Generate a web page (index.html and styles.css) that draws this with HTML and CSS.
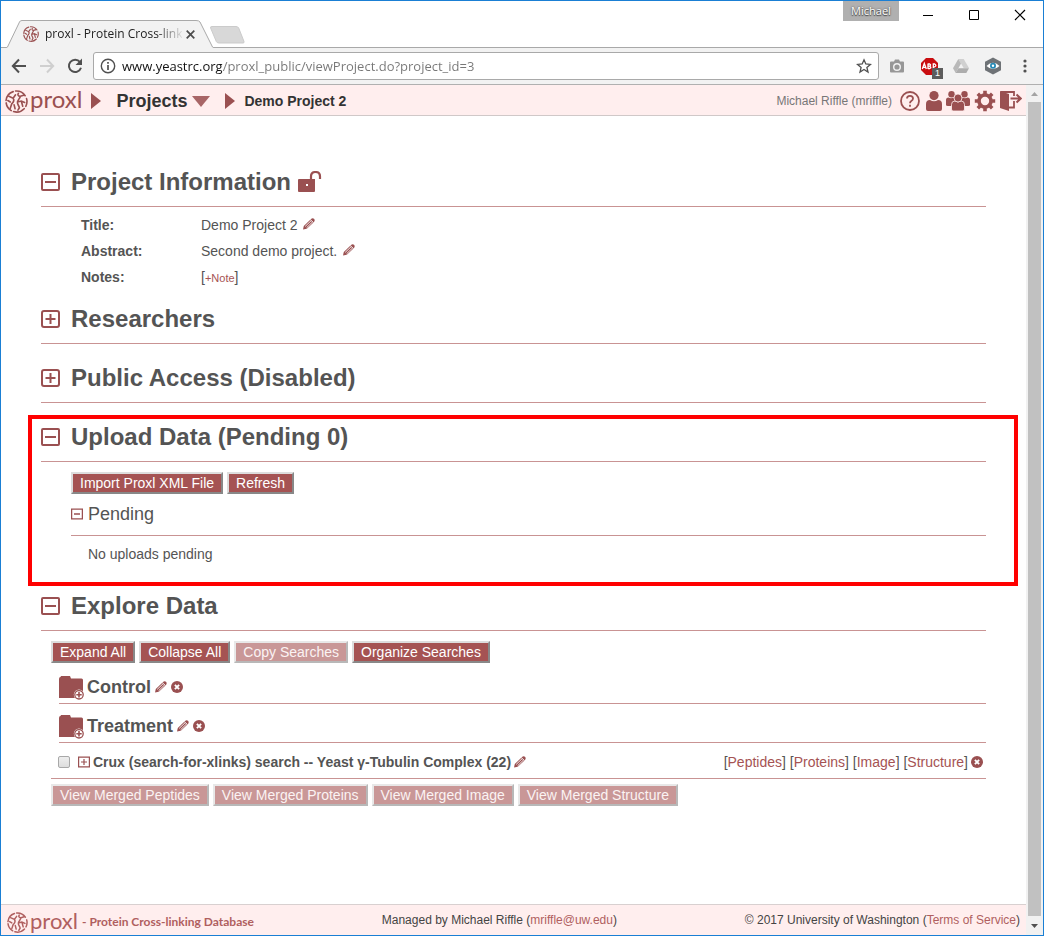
FILE: index.html
```html
<!DOCTYPE html>
<html lang="en">
<head>
<meta charset="utf-8">
<title>proxl - Protein Cross-linking Database</title>
<link rel="stylesheet" href="styles.css">
</head>
<body>
<svg class="defs" aria-hidden="true">
  <symbol id="logo" viewBox="0 0 24 24">
    <g fill="none" stroke="currentColor" stroke-width="1.7" stroke-linecap="round">
      <path d="M8.500 1.700A10.900 10.900 0 0 0 1.100 11M1.200 13.500A10.900 10.900 0 0 0 6.500 21.500M9 22.500A10.900 10.900 0 0 0 20 19.500M21.700 17A10.900 10.900 0 0 0 22.500 9M21 6A10.900 10.900 0 0 0 11 1.100"/>
      <path d="M4 6.500L8.500 8.500L11 5M8.500 8.500C10 10.500 9 12.500 7 14.500L5.500 19M3 11L5.500 12.500M14 3.500C12.800 5 13.800 6.800 16 6.500L19.500 5.500M16 6.500C15.500 9 13.500 10 13 12.500C12.600 15 14.500 16 15 18.500L13.500 21M9.500 15.500L10.500 19.500M13 12.500L17 11.500L20.500 13M17 11.500L18.500 17"/>
    </g>
  </symbol>
  <symbol id="minus" viewBox="0 0 19 20">
    <rect x="1" y="2" width="17" height="16" rx="1" fill="none" stroke="currentColor" stroke-width="2"/>
    <path d="M4 10H15" stroke="currentColor" stroke-width="2"/>
  </symbol>
  <symbol id="plus" viewBox="0 0 19 20">
    <rect x="1" y="2" width="17" height="16" rx="2" fill="none" stroke="currentColor" stroke-width="2"/>
    <path d="M4.500 10H14.500M9.500 5V15" stroke="currentColor" stroke-width="2"/>
  </symbol>
  <symbol id="minus-small" viewBox="0 0 12 12">
    <path d="M.6 1.100H11.400V10.900H.6ZM3 6H9" fill="none" stroke="currentColor" stroke-width="1.300"/>
  </symbol>
  <symbol id="plus-small" viewBox="0 0 12 12">
    <path d="M.6 1.100H11.400V10.900H.6ZM3 6H9M6 3V9" fill="none" stroke="currentColor" stroke-width="1.200"/>
  </symbol>
  <symbol id="pencil" viewBox="0 0 12 12">
    <path d="M0 11.500L.8 8L7.800 1.200Q9.500 -.4 11 .8Q12.400 2.200 11 3.900L3.800 10.800Z" fill="currentColor"/>
    <path d="M2.200 8.400L8.200 2.600M3.600 9.800L9.600 3.900M7.400 1.700L10.500 4.700" fill="none" stroke="#fff" stroke-width=".9"/>
  </symbol>
  <symbol id="remove" viewBox="0 0 12 12">
    <circle cx="6" cy="6" r="6" fill="currentColor"/>
    <path d="M3.900 3.900L8.100 8.100M8.100 3.900L3.900 8.100" stroke="#fff" stroke-width="1.900"/>
  </symbol>
  <symbol id="folder" viewBox="0 0 26 24">
    <path d="M0 22V3Q0 1 1.500 1L2 0H11L12 2.500H22.500Q24 2.500 24 4V22Z" fill="currentColor"/>
    <circle cx="20" cy="18.800" r="5.200" fill="#fff"/>
    <circle cx="20" cy="18.800" r="4.200" fill="none" stroke="currentColor" stroke-width="1.300"/>
    <path d="M17.300 18.800H22.700M20 16.100V21.500" stroke="currentColor" stroke-width="1.600"/>
  </symbol>
  <symbol id="tri-right" viewBox="0 0 10 16">
    <path d="M0 0L10 8L0 16Z" fill="currentColor"/>
  </symbol>
</svg>

<div class="window">
  <div class="titlebar">
    <div class="tab">
      <svg class="tab-shape" viewBox="0 0 208 28" preserveAspectRatio="none" aria-hidden="true"><path d="M0 28L1.500 27L13.500 2Q14 .5 16 .5H190Q193 .5 194 2L206.500 27L208 28" fill="#f2f2f2" stroke="#a9a9a9"/></svg>
      <svg class="tab-logo" aria-hidden="true"><use href="#logo"/></svg>
      <span class="tab-title">proxl - Protein Cross-link</span>
      <button class="plain tab-close" aria-label="Close tab"><svg width="9" height="9" viewBox="0 0 9 9"><path d="M.7 .7L8.300 8.300M8.300 .7L.7 8.300" stroke="#4c4c4c" stroke-width="1.700"/></svg></button>
    </div>
    <button class="plain new-tab" aria-label="New tab"><svg width="35" height="18" viewBox="0 0 35 18"><path d="M2 .5H26Q28 .5 28.700 2L34 15.500Q34.500 17 33 17H9Q7 17 6.300 15.500L.6 2Q0 .5 2 .5Z" fill="#d8d8d8" stroke="#cbcbcb"/></svg></button>
    <div class="window-controls">
      <span class="profile">Michael</span>
      <button class="plain" aria-label="Minimize"><svg width="12" height="12" viewBox="0 0 12 12"><path d="M1 6.500H11" stroke="#000"/></svg></button>
      <button class="plain" aria-label="Maximize"><svg width="12" height="12" viewBox="0 0 12 12"><path d="M1.500 1.500H10.500V10.500H1.500Z" fill="none" stroke="#000"/></svg></button>
      <button class="plain" aria-label="Close"><svg width="12" height="12" viewBox="0 0 12 12"><path d="M1 1L11 11M11 1L1 11" stroke="#000" stroke-width="1.200"/></svg></button>
    </div>
  </div>

  <div class="toolbar">
    <button class="plain nav" aria-label="Back"><svg width="16" height="16" viewBox="0 0 16 16"><path d="M15 8H2M8 1.500L1.800 8L8 14.500" fill="none" stroke="#505050" stroke-width="2"/></svg></button>
    <button class="plain nav" aria-label="Forward"><svg width="16" height="16" viewBox="0 0 16 16"><path d="M1 8H14M8 1.500L14.200 8L8 14.500" fill="none" stroke="#cfcfcf" stroke-width="2"/></svg></button>
    <button class="plain nav" aria-label="Reload"><svg width="16" height="16" viewBox="0 0 16 16"><path d="M13 4A6.200 6.200 0 1 0 14 9.800" fill="none" stroke="#505050" stroke-width="2"/><path d="M15 .5V7H8.500Z" fill="#505050"/></svg></button>
    <div class="omnibox">
      <svg width="16" height="16" viewBox="0 0 16 16" aria-hidden="true"><circle cx="8" cy="8" r="6.700" fill="none" stroke="#505050" stroke-width="1.400"/><path d="M8 7V12M8 4V5.700" stroke="#505050" stroke-width="1.700"/></svg>
      <input class="url" type="text" aria-label="Address" value="www.yeastrc.org/proxl_public/viewProject.do?project_id=3">
      <button class="plain" aria-label="Bookmark this page"><svg width="16" height="16" viewBox="0 0 16 16"><path d="M8 1.800L9.800 6L14.400 6.400L10.900 9.400L12 14L8 11.500L4 14L5.100 9.400L1.600 6.400L6.200 6Z" fill="none" stroke="#505050" stroke-width="1.300"/></svg></button>
    </div>
    <button class="plain ext" aria-label="Screenshot"><svg width="16" height="14" viewBox="0 0 16 14"><path d="M2 2.500H5L6 .5H10L11 2.500H14Q15 2.500 15 3.500V12.500Q15 13.500 14 13.500H2Q1 13.500 1 12.500V3.500Q1 2.500 2 2.500Z" fill="#979797"/><circle cx="8" cy="8" r="3.300" fill="none" stroke="#f2f2f2" stroke-width="1.400"/></svg></button>
    <button class="plain ext" aria-label="Adblock Plus">
      <svg width="17" height="17" viewBox="0 0 17 17"><path d="M5 0H12L17 5V12L12 17H5L0 12V5Z" fill="#c90d10"/><path d="M1.300 11L3.300 5.500L5.300 11M2 9.300H4.700M7 5.500V11M7 6H8.700Q10.500 7.100 8.700 8.200H7M8.700 8.200Q11 9.500 8.700 10.500H7M12.300 11.200V6H13.700Q16 7.400 13.700 8.800H12.300" fill="none" stroke="#fff" stroke-width="1.300"/></svg>
      <span class="badge">1</span>
    </button>
    <button class="plain ext" aria-label="Drive"><svg width="16" height="14" viewBox="0 0 16 14"><path d="M5.300 0H10.700L16 9H10.700Z" fill="#d0d0d0"/><path d="M5.300 0L8 4.600L2.700 14L0 9.300Z" fill="#b9b9b9"/><path d="M5.400 9.300H16L13.300 14H2.700Z" fill="#adadad"/></svg></button>
    <button class="plain ext" aria-label="Privacy"><svg width="18" height="18" viewBox="0 0 18 18"><path d="M9 .5L17 4.800V13.200L9 17.500L1 13.200V4.800Z" fill="#6e7276"/><path d="M2.500 9Q9 2.500 15.500 9Q9 15 2.500 9Z" fill="#fff"/><circle cx="9" cy="8.800" r="3" fill="#2488b5"/><circle cx="9" cy="8.800" r="1.200" fill="#fff"/></svg></button>
    <button class="plain ext" aria-label="Menu"><svg width="4" height="14" viewBox="0 0 4 14"><g fill="#505050"><circle cx="2" cy="2" r="1.600"/><circle cx="2" cy="7" r="1.600"/><circle cx="2" cy="12" r="1.600"/></g></svg></button>
  </div>

  <div class="viewport">
    <div class="page">
      <header class="app-header">
        <a class="brand" href="#"><svg class="brand-logo" aria-hidden="true"><use href="#logo"/></svg><span class="brand-name">proxl</span></a>
        <svg class="tri" aria-hidden="true"><use href="#tri-right"/></svg>
        <a class="projects" href="#">Projects<svg width="18" height="11" viewBox="0 0 18 11" aria-hidden="true"><path d="M0 0H18L9 11Z" fill="#a86566"/></svg></a>
        <svg class="tri" aria-hidden="true"><use href="#tri-right"/></svg>
        <span class="crumb">Demo Project 2</span>
        <span class="user">Michael Riffle (mriffle)</span>
        <nav class="user-nav">
          <a class="help" href="#" aria-label="Help"><svg width="20" height="20" viewBox="0 0 20 20"><circle cx="10" cy="10" r="9" fill="none" stroke="currentColor" stroke-width="1.800"/><path d="M7 7.500Q7 4.800 10 4.800Q13 4.800 13 7.500Q13 9 11.300 10Q10 10.800 10 12.300M10 13.700V15.700" fill="none" stroke="currentColor" stroke-width="1.800"/></svg></a>
          <a href="#" aria-label="Account"><svg width="16" height="20" viewBox="0 0 16 20"><circle cx="8" cy="4.600" r="4.600" fill="currentColor"/><path d="M0 18V13Q0 9 4 9Q8 11.500 12 9Q16 9 16 13V18Q16 20 14 20H2Q0 20 0 18Z" fill="currentColor"/></svg></a>
          <a href="#" aria-label="Users"><svg width="24" height="20" viewBox="0 0 24 20"><g fill="currentColor"><circle cx="5.500" cy="3.200" r="3.200"/><circle cx="18.500" cy="3.200" r="3.200"/><path d="M0 14V9Q0 6.500 2.500 6.500Q5 8 7.500 6.500L9 9V15H2Q0 15 0 14ZM24 14V9Q24 6.500 21.500 6.500Q19 8 16.500 6.500L15 9V15H22Q24 15 24 14Z"/></g><g fill="currentColor" stroke="#fee" stroke-width=".8"><path d="M5.500 18V13.500Q5.500 10 9 10Q12 12 15 10Q18.500 10 18.500 13.500V18Q18.500 20 17 20H7Q5.500 20 5.500 18Z"/><circle cx="12" cy="7" r="4"/></g></svg></a>
          <a href="#" aria-label="Settings"><svg width="22" height="22" viewBox="0 0 22 22"><circle cx="11" cy="11" r="6" fill="none" stroke="currentColor" stroke-width="3.600"/><g stroke="currentColor" stroke-width="3.600"><path d="M11 .8V4M11 18V21.200M.8 11H4M18 11H21.200M3.800 3.800L6 6M16 16L18.200 18.200M18.200 3.800L16 6M6 16L3.800 18.200"/></g></svg></a>
          <a href="#" aria-label="Log out"><svg width="22" height="20" viewBox="0 0 22 20"><path d="M0 0L9 3V20L0 17Z" fill="currentColor"/><path d="M1 1H14V5M14 10V16.500H8" fill="none" stroke="currentColor" stroke-width="1.800"/><path d="M10.500 7.500H20M16.500 3.500L20.700 7.500L16.500 11.500" fill="none" stroke="currentColor" stroke-width="2"/></svg></a>
        </nav>
      </header>

      <main class="content">
        <section class="section">
          <h1 class="heading"><button class="plain toggle" aria-label="Collapse"><svg width="19" height="20"><use href="#minus"/></svg></button>Project Information<svg class="lock" width="24" height="22" viewBox="0 0 24 22" aria-hidden="true"><path d="M0 9Q0 8 1 8H17V20Q17 21 16 21H1Q0 21 0 20Z" fill="currentColor"/><path d="M13 8V5.500Q13 1 17.500 1Q22 1 22 5.500V8" fill="none" stroke="currentColor" stroke-width="2.200"/><rect x="8" y="13" width="2" height="2" fill="#fff"/></svg></h1>
          <table class="details">
            <tr><th scope="row">Title:</th><td>Demo Project 2 <button class="plain edit" aria-label="Edit title"><svg width="12" height="12"><use href="#pencil"/></svg></button></td></tr>
            <tr><th scope="row">Abstract:</th><td>Second demo project. <button class="plain edit" aria-label="Edit abstract"><svg width="12" height="12"><use href="#pencil"/></svg></button></td></tr>
            <tr><th scope="row">Notes:</th><td>[<a class="note" href="#">+Note</a>]</td></tr>
          </table>
        </section>

        <section class="section">
          <h1 class="heading"><button class="plain toggle" aria-label="Expand"><svg width="19" height="20"><use href="#plus"/></svg></button>Researchers</h1>
        </section>

        <section class="section">
          <h1 class="heading"><button class="plain toggle" aria-label="Expand"><svg width="19" height="20"><use href="#plus"/></svg></button>Public Access (Disabled)</h1>
        </section>

        <section class="section marked">
          <h1 class="heading"><button class="plain toggle" aria-label="Collapse"><svg width="19" height="20"><use href="#minus"/></svg></button>Upload Data (Pending 0)</h1>
          <div class="upload">
            <div class="buttons">
              <button class="action">Import Proxl XML File</button>
              <button class="action">Refresh</button>
            </div>
            <h2 class="subheading"><button class="plain" aria-label="Collapse"><svg width="12" height="12"><use href="#minus-small"/></svg></button>Pending</h2>
            <p class="empty">No uploads pending</p>
          </div>
        </section>

        <section class="section">
          <h1 class="heading"><button class="plain toggle" aria-label="Collapse"><svg width="19" height="20"><use href="#minus"/></svg></button>Explore Data</h1>
          <div class="explore">
            <div class="buttons">
              <button class="action">Expand All</button>
              <button class="action">Collapse All</button>
              <button class="action" disabled>Copy Searches</button>
              <button class="action">Organize Searches</button>
            </div>
            <div class="folder">
              <svg class="folder-icon" width="26" height="24" aria-hidden="true"><use href="#folder"/></svg>
              <h2 class="folder-name">Control</h2>
              <button class="plain" aria-label="Rename Control"><svg width="12" height="12"><use href="#pencil"/></svg></button>
              <button class="plain" aria-label="Delete Control"><svg width="12" height="12"><use href="#remove"/></svg></button>
            </div>
            <div class="folder">
              <svg class="folder-icon" width="26" height="24" aria-hidden="true"><use href="#folder"/></svg>
              <h2 class="folder-name">Treatment</h2>
              <button class="plain" aria-label="Rename Treatment"><svg width="12" height="12"><use href="#pencil"/></svg></button>
              <button class="plain" aria-label="Delete Treatment"><svg width="12" height="12"><use href="#remove"/></svg></button>
            </div>
            <div class="search">
              <input class="check" type="checkbox" id="search-22">
              <button class="plain" aria-label="Expand search"><svg width="12" height="12"><use href="#plus-small"/></svg></button>
              <label class="search-name" for="search-22">Crux (search-for-xlinks) search -- Yeast γ-Tubulin Complex (22)</label>
              <button class="plain" aria-label="Rename search"><svg width="12" height="12"><use href="#pencil"/></svg></button>
              <span class="links">[<a href="#">Peptides</a>] [<a href="#">Proteins</a>] [<a href="#">Image</a>] [<a href="#">Structure</a>]</span>
              <button class="plain" aria-label="Delete search"><svg width="12" height="12"><use href="#remove"/></svg></button>
            </div>
            <div class="buttons merged">
              <button class="action" disabled>View Merged Peptides</button>
              <button class="action" disabled>View Merged Proteins</button>
              <button class="action" disabled>View Merged Image</button>
              <button class="action" disabled>View Merged Structure</button>
            </div>
          </div>
        </section>
      </main>

      <footer class="footer">
        <a class="footer-brand" href="#"><svg class="footer-logo" aria-hidden="true"><use href="#logo"/></svg><span class="footer-name">proxl</span><span class="footer-tag">- Protein Cross-linking Database</span></a>
        <span>Managed by Michael Riffle (<a href="#">mriffle@uw.edu</a>)</span>
        <span>© 2017 University of Washington (<a href="#">Terms of Service</a>)</span>
      </footer>
    </div>
    <div class="scrollbar" aria-hidden="true">
      <svg width="17" height="17" viewBox="0 0 17 17"><path d="M5 11L8.500 7L12 11Z" fill="#a3a3a3"/></svg>
      <div class="thumb"></div>
      <svg width="17" height="19" viewBox="0 0 17 19"><path d="M5 8L8.500 12L12 8Z" fill="#505050"/></svg>
    </div>
  </div>
</div>
</body>
</html>
```
FILE: styles.css
```css
* { box-sizing: border-box; }

body {
  margin: 0;
  font: 14px/18px "Liberation Sans", Arial, sans-serif;
  color: #545454;
}

a { color: #a55353; text-decoration: none; }
svg { display: block; flex: none; }

.defs { position: absolute; width: 0; height: 0; }

.plain {
  display: flex;
  align-items: center;
  justify-content: center;
  padding: 0;
  border: 0;
  background: none;
  color: #9a5051;
}

.window {
  display: flex;
  flex-direction: column;
  min-height: 100vh;
  border: 1px solid #1a7fd4;
  background: #fff;
}

/* Browser title bar */
.titlebar {
  display: flex;
  height: 47px;
  border-bottom: 1px solid #a9a9a9;
  font-family: "Open Sans", sans-serif;
  font-size: 12px;
}
.tab {
  position: relative;
  align-self: flex-end;
  display: flex;
  align-items: center;
  width: 208px;
  height: 28px;
  margin: 0 0 -1px 5px;
  padding: 0 16px 0 17px;
}
.tab-shape { position: absolute; inset: 0; width: 100%; height: 100%; }
.tab-logo { position: relative; width: 16px; height: 16px; color: #9a5051; }
.tab-title {
  position: relative;
  flex: 1;
  margin-left: 6px;
  white-space: nowrap;
  color: #222;
  -webkit-mask-image: linear-gradient(to right, #000 110px, transparent 140px);
  mask-image: linear-gradient(to right, #000 110px, transparent 140px);
}
.tab-close { position: relative; width: 16px; height: 16px; }
.new-tab { align-self: flex-end; height: 18px; margin: 0 0 3px -4px; }
.window-controls { display: flex; align-items: flex-start; margin-left: auto; }
.window-controls .plain { width: 46px; height: 28px; }
.profile {
  width: 56px;
  height: 20px;
  margin-right: 6px;
  background: #b0b0b0;
  color: #fff;
  font-size: 11px;
  line-height: 20px;
  text-align: center;
  text-shadow: 0 0 2px #444, 0 1px 1px #444;
}

/* Browser toolbar */
.toolbar {
  display: flex;
  align-items: center;
  height: 37px;
  padding: 0 2px 0 4px;
  border-bottom: 1px solid #b0b0b0;
  background: #f2f2f2;
}
.nav { width: 28px; height: 28px; }
.ext { position: relative; width: 32px; height: 28px; }
.badge {
  position: absolute;
  right: 2px;
  bottom: 1px;
  width: 11px;
  height: 11px;
  background: #5c5c5c;
  color: #fff;
  font-size: 9px;
  line-height: 11px;
}
.omnibox {
  display: flex;
  flex: 1;
  align-items: center;
  gap: 6px;
  height: 28px;
  margin: 0 2px 0 4px;
  padding: 0 6px;
  border: 1px solid #a9a9a9;
  border-radius: 3px;
  background: #fff;
}
.url {
  flex: 1;
  min-width: 0;
  padding: 0;
  border: 0;
  outline: 0;
  background: linear-gradient(to right, #111 100px, #777 100px);
  -webkit-background-clip: text;
  background-clip: text;
  color: #777;
  -webkit-text-fill-color: transparent;
  font: 13px/20px "Open Sans", sans-serif;
}

/* Page area */
.viewport { display: flex; flex: 1; }
.page { display: flex; flex: 1; flex-direction: column; min-width: 0; }

.scrollbar {
  display: flex;
  flex-direction: column;
  width: 17px;
  background: #f1f1f1;
}
.thumb { flex: 1; margin: 0 2px; background: #c1c1c1; }

.app-header {
  display: flex;
  align-items: center;
  height: 31px;
  padding: 2px 4px 0;
  border-bottom: 1px solid #d0c8c8;
  background: #fee;
}
.brand { display: flex; align-items: center; gap: 2px; color: #9a5051; }
.brand-logo { width: 23px; height: 23px; }
.brand-name { padding-bottom: 4px; font: 24px/24px Lato, sans-serif; }
.tri { width: 10px; height: 16px; margin: 0 9px; color: #9a5051; }
.projects {
  display: flex;
  align-items: center;
  gap: 5px;
  margin: 0 6px;
  color: #333;
  font-size: 18px;
  font-weight: bold;
}
.crumb { color: #333; font-weight: bold; }
.user { margin-left: auto; color: #777; font-size: 12px; }
.user-nav { display: flex; align-items: center; gap: 4px; margin-left: 8px; }
.user-nav a { color: #9a5051; }
.user-nav .help { margin-right: 2px; }

.content { flex: 1; padding: 52px 40px 40px; }
.section { margin-bottom: 20px; }

.heading {
  display: flex;
  align-items: center;
  margin: 0;
  padding-bottom: 10px;
  border-bottom: 1px solid #c99393;
  font-size: 24px;
  line-height: 28px;
}
.toggle { margin-right: 11px; }
.lock { margin-left: 7px; color: #9a5051; }

.details {
  margin: 5px 0 15px 40px;
  border-collapse: collapse;
}
.details tr { height: 26px; }
.details th { width: 120px; padding: 0; text-align: left; }
.details td { padding: 0; }
.edit { display: inline-flex; margin-left: 2px; }
.note { font-size: 11px; }

.section:has(.details) { margin-bottom: 15px; }

/* Highlight frame drawn round one section */
.marked { position: relative; margin-bottom: 29px; }
.marked::after {
  content: "";
  position: absolute;
  inset: -8px -32px -23px -13px;
  border: 4px solid #f00;
  pointer-events: none;
}

.upload { padding: 10px 0 0 30px; }
.buttons { display: flex; gap: 4px; }
.action {
  height: 22px;
  padding: 0 5px;
  border: 2px solid;
  border-color: #ddd #888 #888 #ddd;
  padding: 0 6px;
  background: #a55353;
  color: #fff;
  font: 14px/18px "Liberation Sans", Arial, sans-serif;
}
.action { padding: 0 7px; }
.action:disabled {
  border-color: #e8e8e8 #b8b8b8 #b8b8b8 #e8e8e8;
  background: #c99797;
  color: #fbf3f3;
}
.subheading {
  display: flex;
  align-items: center;
  gap: 5px;
  margin: 10px 0 0;
  padding-bottom: 11px;
  border-bottom: 1px solid #c99393;
  font-size: 18px;
  font-weight: normal;
  line-height: 20px;
}
.empty { margin: 9px 0 0 17px; }

.explore { padding: 10px 0 0 10px; }
.folder {
  display: flex;
  align-items: center;
  gap: 4px;
  height: 39px;
  margin-left: 8px;
  padding-top: 5px;
  border-bottom: 1px solid #c99393;
}
.buttons + .folder { height: 41px; padding-top: 7px; }
.folder-icon { margin-top: 2px; color: #9a5051; }
.folder-name { margin: 0 0 0 -2px; font-size: 18px; line-height: 20px; }
.search {
  display: flex;
  align-items: center;
  gap: 3px;
  height: 36px;
  padding: 3px 3px 0 7px;
  border-bottom: 1px solid #c99393;
}
.check {
  appearance: none;
  width: 12px;
  height: 12px;
  margin: 0 5px 0 0;
  border: 1px solid #a8a8a8;
  border-radius: 2px;
  background: linear-gradient(#eee, #ddd);
}
.search-name { font-weight: bold; }
.links { margin-left: auto; }
.merged { padding-top: 5px; }

.footer {
  display: flex;
  align-items: center;
  justify-content: space-between;
  height: 31px;
  padding: 0 6px;
  border-top: 1px solid #d8d0d0;
  background: #fee;
  color: #444;
  font-size: 12px;
}
.footer a { color: #b05f5f; }
.footer-brand { display: flex; align-items: center; padding-top: 4px; }
.footer-logo { width: 21px; height: 21px; margin-right: 2px; }
.footer-name { margin-right: 4px; padding-bottom: 3px; font: 22px/20px Lato, sans-serif; }
.footer-tag { font: bold 12px/20px Lato, sans-serif; }
```
